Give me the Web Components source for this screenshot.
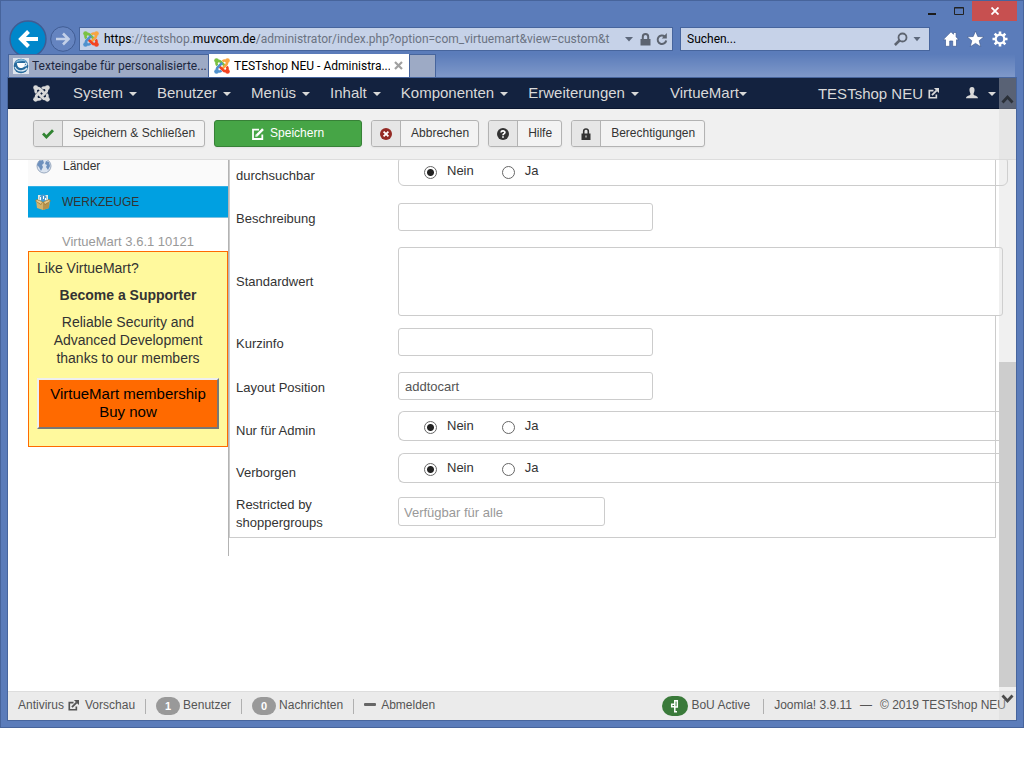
<!DOCTYPE html>
<html lang="de">
<head>
<meta charset="utf-8">
<title>TESTshop NEU - Administration</title>
<style>
html,body{margin:0;background:#fff;font-family:"Liberation Sans",Arial,sans-serif;font-size:13px;color:#333}
</style>
</head>
<body>
<browser-window></browser-window>
<script>
const define = (name, html) => customElements.define(name, class extends HTMLElement {
  constructor() {
    super();
    const t = document.createElement('template');
    t.innerHTML = '<style>*{box-sizing:border-box}button,input,textarea{font:inherit;margin:0}svg{display:block;flex:none}a{color:inherit;text-decoration:none}</style>' + (typeof html === 'function' ? html(this) : html);
    this.attachShadow({mode: 'open'}).append(t.content.cloneNode(true));
  }
});

const ICONS = {
  joomla: (c) => `<svg viewBox="0 0 16 16"><g fill="none" stroke-width="2.5" stroke-linejoin="round">
    <path stroke="${c[0]}" d="M3.2 7.5C2.2 6 2.3 4.6 3.2 3.7 4.4 2.6 6 3 7 4l4.2 4.2"/>
    <path stroke="${c[1]}" d="M8.500 3.200C10 2.200 11.400 2.300 12.300 3.200 13.400 4.400 13 6 12 7L7.800 11.200"/>
    <path stroke="${c[2]}" d="M12.800 8.500C13.800 10 13.700 11.400 12.800 12.300 11.600 13.400 10 13 9 12L4.800 7.800"/>
    <path stroke="${c[3]}" d="M7.500 12.800C6 13.800 4.600 13.700 3.700 12.800 2.600 11.600 3 10 4 9L8.200 4.800"/></g>
    <circle cx="2.500" cy="2.500" r="2.300" fill="${c[0]}"/><circle cx="13.500" cy="2.500" r="2.300" fill="${c[1]}"/>
    <circle cx="13.500" cy="13.500" r="2.300" fill="${c[2]}"/><circle cx="2.500" cy="13.500" r="2.300" fill="${c[3]}"/></svg>`,
  external: '<svg viewBox="0 0 12 12" fill="none" stroke="currentColor"><path stroke-width="1.800" d="M6 2.900H1.400V10.600H9.100V7"/><path stroke-width="2" d="M4.300 7.700 9.500 2.500"/><path fill="currentColor" stroke="none" d="M6.500 0H12V5.500L10.200 3.700 8.300 1.800z"/></svg>',
  check: '<svg viewBox="0 0 12 12"><path fill="none" stroke="#318432" stroke-width="2.800" d="M1 5.600 4.400 9 11 2.300"/></svg>',
  edit: '<svg viewBox="0 0 12 12" fill="none" stroke="#fff"><path stroke-width="1.800" d="M7 1.700H1V11H10.300V6.500"/><path stroke-width="2.400" d="M4.800 7.300 11 1.100"/><path fill="#fff" stroke="none" d="M3.300 8.800 3.700 6.300 5.800 8.400z"/></svg>',
  cancel: '<svg viewBox="0 0 12 12"><circle cx="6" cy="6" r="6" fill="#942a25"/><path stroke="#fff" stroke-width="1.800" d="M3.600 3.600 8.400 8.400M8.400 3.600 3.600 8.400"/></svg>',
  help: '<svg viewBox="0 0 12 12"><circle cx="6" cy="6" r="6" fill="#333"/><path fill="none" stroke="#fff" stroke-width="1.700" d="M4 4.500C4.200 2.300 8 2.400 7.900 4.500 7.800 5.800 6 5.600 6 7.300M6 8.200V9.700"/></svg>',
  lock: '<svg viewBox="0 0 12 12"><path fill="none" stroke="#333" stroke-width="1.600" d="M3.700 6V3.200C3.700.2 8.300.2 8.300 3.200V6"/><path fill="#333" d="M1.500 5.500H10.500V12H1.500z"/><path fill="#eee" d="M5.500 7.500h1v2h-1z"/></svg>',
  user: '<svg viewBox="0 0 12 12"><path fill="currentColor" d="M6 0C8 0 8.700 1.300 8.500 3.500 8.300 5.500 7.500 6 7.500 7.200 7.700 8.800 12 8.300 12 11.300H0C0 8.300 4.300 8.800 4.500 7.200 4.500 6 3.700 5.500 3.500 3.500 3.300 1.300 4 0 6 0z"/></svg>'
};
const WHITE = ['#d9d9d9','#d9d9d9','#d9d9d9','#d9d9d9'];
const COLOUR = ['#7ac143','#f9a541','#f44321','#5091cd'];

/* ---------- browser chrome ---------- */
define('title-bar', `<style>
:host{display:flex;justify-content:flex-end;height:20px;padding-right:6px}
button{border:0;background:none;padding:0;display:grid;place-items:center;width:27px;height:20px}
.x{width:45px;background:#c75050}
</style>
<button aria-label="Minimieren"><svg width="10" height="10"><path fill="#1c1c1c" d="M1 7h8v2H1z"/></svg></button>
<button aria-label="Maximieren"><svg width="10" height="10"><path fill="none" stroke="#222" d="M.5 1.500h9v7h-9zM.5 2h9"/></svg></button>
<button class="x" aria-label="Schließen"><svg width="8" height="8"><path stroke="#fff" stroke-width="1.800" d="M.5.5l7 7M7.500.5l-7 7"/></svg></button>`);

define('address-row', `<style>
:host{display:flex;align-items:center;height:33px;padding:3px 15px 0 8px;font-family:Roboto,"Open Sans",sans-serif;font-size:12px;color:#000}
.nav{border:0;background:none;padding:0;flex:none}
.back{width:38px;height:38px;margin-right:3px}.fwd{width:26px;height:26px;margin-right:3px}
.url,.search{display:flex;align-items:center;height:24px;border:1px solid #47659d;background:#c6d2e8;min-width:0;flex:585 1 0}
.search{flex-grow:234;margin-left:7px;padding:0 8px 0 6px}
.url{padding:0 4px 0 3px}
.text{flex:1;min-width:0;white-space:nowrap;overflow:hidden;color:#6b7382;margin:0 7px 0 5px;line-height:20px}
.text b{font-weight:400;color:#000}
input{border:0;background:none;flex:1;min-width:0;padding:0;outline:0}input::placeholder{color:#000;opacity:1}
.g{border:0;background:none;padding:0;margin-left:5px}
.tools{display:flex;gap:8px;margin-left:13px}.tools button{border:0;padding:0;background:none}
</style>
<button class="nav back" aria-label="Zurück"><svg width="38" height="38"><circle cx="19" cy="19" r="18" fill="#0087ca" stroke="#3f5c93" stroke-width="1.400"/><path fill="none" stroke="#fff" stroke-width="4" d="M29 19H12M19.500 11.500 12 19l7.500 7.500"/></svg></button>
<button class="nav fwd" aria-label="Vorwärts"><svg width="26" height="26"><circle cx="13" cy="13" r="12.300" fill="#6584c0" stroke="#415d94"/><path fill="none" stroke="#c3d0e8" stroke-width="2.600" d="M6 13h12M13 7.500 18.500 13 13 18.500"/></svg></button>
<div class="url">${ICONS.joomla(COLOUR).replace('<svg','<svg width="16" height="16"')}
<div class="text"><b>https</b>://testshop.<b>muvcom.de</b>/administrator/index.php?option=com_virtuemart&amp;view=custom&amp;t</div>
<button class="g" aria-label="Verlauf"><svg width="8" height="5"><path fill="#5d687b" d="M0 0h8L4 4.500z"/></svg></button>
<svg style="margin-left:7px" width="11" height="13"><path fill="none" stroke="#5d6470" stroke-width="2" d="M2.800 7V3.700c0-3.600 5.400-3.600 5.400 0V7"/><path fill="#5d6470" d="M.5 6h10v6.500H.5z"/></svg>
<button class="g" aria-label="Aktualisieren"><svg width="12" height="13"><path fill="none" stroke="#5d6470" stroke-width="2" d="M10.200 7.500A4.300 4.300 0 1 1 8.800 3.500"/><path fill="#5d6470" d="M5.800 5.500h5V0z"/></svg></button></div>
<div class="search"><input aria-label="Suchen" placeholder="Suchen...">
<button class="g" aria-label="Suche starten"><svg width="14" height="14"><circle cx="8.500" cy="5.500" r="4" fill="none" stroke="#5d6470" stroke-width="1.800"/><path stroke="#5d6470" stroke-width="2.500" d="M5.500 8.500.9 13"/></svg></button>
<button class="g" aria-label="Suchanbieter"><svg width="8" height="5"><path fill="#5d687b" d="M.5 0h7L4 4.300z"/></svg></button></div>
<div class="tools">
<button aria-label="Startseite"><svg width="16" height="16"><path fill="#fff" stroke="#435f95" stroke-width=".7" d="M8 .8 10.500 3.300V1.500h2.600V6L16 8.800H13.500V15.300H9.700V10H6.700V15.300H2.500V8.800H0z"/></svg></button>
<button aria-label="Favoriten"><svg width="17" height="16"><path fill="#fff" stroke="#435f95" stroke-width=".7" d="M8.500 0 10.800 5.500 17 5.800 12.200 9.700 13.800 15.800 8.500 12.400 3.200 15.800 4.800 9.700 0 5.800 6.200 5.500z"/></svg></button>
<button aria-label="Extras"><svg width="16" height="16"><g stroke="#fff" stroke-width="2.600"><path d="M8 .5v3M8 12.500v3M.5 8h3M12.500 8h3M2.700 2.700 5 5M11 11l2.300 2.300M13.300 2.700 11 5M5 11l-2.300 2.300"/></g><circle cx="8" cy="8" r="4.300" fill="none" stroke="#fff" stroke-width="2.200"/></svg></button></div>`);

define('browser-tabs', `<style>
:host{display:flex;position:relative;height:23px;font-family:Roboto,"Open Sans",sans-serif;font-size:12px;color:#1c2740}
.tab{display:flex;align-items:center;width:201px;border:1px solid #47659d;border-bottom:0;background:#9daac5;padding:0 0 0 4px;gap:3px;white-space:nowrap}
.tab a{flex:1;min-width:0;overflow:hidden;line-height:20px}
.on{background:#fff;border-width:0;color:#000;width:200px;padding:0 5px;gap:4px}
.new{width:27px;border:1px solid #47659d;border-bottom:0;background:#9daac5;padding:0}
.rest{flex:1;margin-right:8px;background:linear-gradient(#ffffff00,#ffffff38)}
.c{border:0;background:none;padding:0}
</style>
<div class="tab"><svg width="16" height="16"><path fill="#dfe6ee" d="M0 0h16v16H0z"/><circle cx="8" cy="8" r="7.300" fill="#276a9c"/><path fill="#7fb7da" d="M2 5C5 0 11 0 14 4 10 2 6 3 2 5z"/><path fill="#fff" d="M4 5h8c0 4-2 5-4 5s-4-1-4-5z"/><path fill="none" stroke="#d7e9f5" stroke-width="1.300" d="M2 9c2 5 9 5 12 1M12 5c3 0 2 3-1 3"/></svg><a href="#">Texteingabe für personalisierte...</a></div>
<div class="tab on">${ICONS.joomla(COLOUR).replace('<svg','<svg width="16" height="16"')}<a href="#">TESTshop NEU - Administra...</a><button class="c" aria-label="Tab schließen"><svg width="10" height="10"><path stroke="#a0a0a0" stroke-width="2.200" d="M1 1l7 7M8 1 1 8"/></svg></button></div>
<button class="new" aria-label="Neuer Tab"></button><div class="rest"></div>`);

/* ---------- Joomla navigation ---------- */
define('nav-item', `<style>
:host{display:block}a{display:flex;align-items:center;gap:var(--caret-gap,6px);line-height:20px}
i{border:4px solid transparent;border-top-color:#d9d9d9;border-bottom:0;margin-top:2px}
</style><a href="#"><slot></slot><i></i></a>`);

define('joomla-navbar', `<style>
:host{display:flex;align-items:center;height:31px;padding:0 20px 0 25px;background:#13223f;border-bottom:1px solid #0b1730;font-size:15px;color:#d9d9d9}
nav{display:flex;gap:20px;margin-left:23px}.vm{margin-left:11px;--caret-gap:0px}
.right{display:flex;align-items:center;margin-left:auto;gap:27px}.site{display:flex;align-items:center;gap:5px}
.right nav-item{--caret-gap:10px}
</style>
<a href="#" aria-label="Joomla">${ICONS.joomla(WHITE).replace('<svg','<svg width="17" height="17"')}</a>
<nav><nav-item>System</nav-item><nav-item>Benutzer</nav-item><nav-item>Menüs</nav-item><nav-item>Inhalt</nav-item><nav-item>Komponenten</nav-item><nav-item>Erweiterungen</nav-item><nav-item class="vm">VirtueMart</nav-item></nav>
<div class="right"><a class="site" href="#">TESTshop NEU ${ICONS.external.replace('<svg','<svg width="11" height="11"')}</a>
<nav-item>${ICONS.user.replace('<svg','<svg width="12" height="12"')}</nav-item></div>`);

define('tool-button', el => `<style>
:host{display:block}
button{display:flex;align-items:stretch;justify-content:center;height:27px;padding:0;border:1px solid #b3b3b3;border-radius:3px;background:#f3f3f3;color:#333;font-size:12px;overflow:hidden;box-shadow:0 1px 2px #0000000d}
.i{display:grid;place-items:center;width:29px;background:#e6e6e6;border-right:1px solid #b3b3b3}
.t{padding:0 9px 0 10px;line-height:25px;white-space:nowrap}
:host([primary]) button{width:148px;background:#46a546;border-color:#378137;color:#fff}
:host([primary]) .i{background:none;border:0;width:auto}:host([primary]) .t{padding:0 0 0 6px}
</style><button><span class="i">${(ICONS[el.getAttribute('icon')] || '').replace('<svg','<svg width="12" height="12"')}</span><span class="t"><slot></slot></span></button>`);

define('action-toolbar', `<style>
:host{display:flex;align-items:center;gap:9px;height:51px;padding:0 25px 1px;background:#f0f0f0;border-bottom:1px solid #ddd}
</style>
<tool-button icon="check">Speichern &amp; Schließen</tool-button><tool-button icon="edit" primary>Speichern</tool-button>
<tool-button icon="cancel">Abbrechen</tool-button><tool-button icon="help">Hilfe</tool-button><tool-button icon="lock">Berechtigungen</tool-button>`);

/* ---------- VirtueMart sidebar ---------- */
define('supporter-box', `<style>
:host{display:block;border:1px solid #ff6a00;background:#fff99d;padding:7px 8px 17px;font-size:14px;line-height:18px;text-align:center}
p{margin:0 0 9px}.l{text-align:left}
button{display:block;width:100%;margin-top:11px;padding:5px 4px 6px;border:2px solid;border-color:#efefef #777 #777 #efefef;background:#ff6a00;color:#000;font-size:15px;line-height:18px}
</style><p class="l">Like VirtueMart?</p><p><b>Become a Supporter</b></p><p>Reliable Security and Advanced Development thanks to our members</p>
<button>VirtueMart membership<br>Buy now</button>`);

define('vm-sidebar', `<style>
:host{display:block;width:201px;border-right:1px solid #b3b3b3;padding-bottom:109px;font-size:12px;flex:none}
a{display:flex;align-items:center;gap:11px;padding-left:8px}
.item{height:26px;background:#fafafa;padding-bottom:15px}
.head{height:32px;background:#00a0e1;padding-left:7px;border-top:1px solid #2fb0e6;border-bottom:1px solid #7cc0e0}
.v{padding:15px 0 0 34px;line-height:18px;font-size:13px;color:#999}
</style>
<a class="item" href="#"><svg width="16" height="16"><circle cx="8" cy="8" r="7" fill="#dbe4f0" stroke="#9aaac0"/><path fill="#6d90bd" d="M3 3l4-1 1 3-2 2 1 2-2 4-2-4-2-2zM10 3l3 1 1 4-2 4-2-3 1-2-2-1z"/></svg>Länder</a>
<a class="head" href="#"><svg width="16" height="16"><path fill="#e4e8df" d="M3 1h10v6H3z"/><circle cx="8" cy="4" r="3.500" fill="#4d9bd0"/><path fill="#fff" d="M5 3h1v3H5zM8 2h1v3H8zM10 4h1v2h-1z"/><path fill="#d2b26c" d="M1 6 8 8l7-2-1 8-6 2-6-2z"/><path fill="#b5934f" d="M8 8v8l6-2V9z"/><path fill="#a37e3d" d="M0 7l2-2 6 3-2 3zM16 7l-2-2-6 3 2 3z"/><path fill="#e6cd91" d="M1 7l1-1 5 2-1 2zM15 7l-1-1-5 2 1 2z"/></svg>WERKZEUGE</a>
<div class="v">VirtueMart 3.6.1 10121</div><supporter-box></supporter-box>`);

/* ---------- form ---------- */
const rowStyle = `<style>
:host{display:flex;align-items:flex-start;min-height:var(--row,44px);padding-left:6px;line-height:18px}
.label{display:flex;align-items:center;width:162px;padding-right:40px;min-height:var(--row,44px);flex:none}
input,textarea{display:block;border:1px solid #ccc;border-radius:3px;background:#fff;color:#555;outline:0}
input[type=text]{width:255px;height:28px;margin-top:6px;padding:0 6px}
textarea{flex:1;height:69px;margin:6px -8px 0 0;resize:none}
input[type=text].multi{width:207px;height:29px;margin-top:3px;padding:2px 5px 0}
input::placeholder{color:#999;opacity:1}
</style>`;
define('text-row', el => {
  const v = el.getAttribute('value') || '', p = el.getAttribute('placeholder') || '';
  const field = el.hasAttribute('area') ? '<textarea id="f"></textarea>'
    : p ? `<input type="text" id="f" class="multi" placeholder="${p}">`
    : `<input type="text" id="f" value="${v}">`;
  return rowStyle + `<label class="label" for="f"><slot></slot></label>` + field;
});
define('radio-row', rowStyle + `<style>
:host{--row:42px}
.group{display:flex;align-items:center;flex:1;height:30px;margin:1px -5px 0 0;padding:0 0 0 25px;border:1px solid #ccc;border-right:0;border-radius:6px 0 0 6px;gap:28px}
:host([closed]) .group{margin-right:-13px;border-right:1px solid #ccc;border-radius:6px}
.group label{display:flex;align-items:center;gap:10px}
input{appearance:none;width:13px;height:13px;border:1px solid #666;border-radius:50%;margin:2px 0 0}
input:checked{background:radial-gradient(circle,#222 3px,#fff 4px)}
</style><span class="label" id="l"><slot></slot></span>
<div class="group" role="radiogroup" aria-labelledby="l"><label><input type="radio" name="r" checked>Nein</label><label><input type="radio" name="r">Ja</label></div>`);

define('custom-field-form', `<style>
:host{display:block;flex:1;min-width:0}
form{border:solid #ccc;border-width:0 1px 1px;margin:-5px 20px 0 0;padding-bottom:4px}
</style><form>
<radio-row closed>durchsuchbar</radio-row>
<text-row>Beschreibung</text-row>
<text-row area style="--row:81px">Standardwert</text-row>
<text-row>Kurzinfo</text-row>
<text-row value="addtocart">Layout Position</text-row>
<radio-row>Nur für Admin</radio-row>
<radio-row>Verborgen</radio-row>
<text-row placeholder="Verfügbar für alle" style="--row:39px">Restricted by shoppergroups</text-row>
</form>`);

/* ---------- status bar ---------- */
define('status-bar', `<style>
:host{display:flex;align-items:center;height:29px;padding:0 10px 2px;background:#ebebeb;border-top:1px solid #ddd;font-size:12px;color:#555;white-space:nowrap}
a,span{display:flex;align-items:center}
.sep{width:1px;height:15px;background:#b0b0b0;margin:2px 10px 0}
.n{justify-content:center;width:24px;height:18px;border-radius:9px;background:#999;color:#fff;font-weight:700;font-size:11px;margin:2px 3px 0 0}
.bou{background:#3a7a3a;width:26px;height:20px;border-radius:10px}
.r{margin-left:auto}
</style>
<a href="#">Antivirus</a><a href="#" style="gap:6px;margin-left:4px">${ICONS.external.replace('<svg','<svg width="11" height="11"')}Vorschau</a><i class="sep"></i>
<a href="#"><span class="n">1</span>Benutzer</a><i class="sep"></i>
<a href="#"><span class="n">0</span>Nachrichten</a><i class="sep"></i>
<a href="#" style="gap:5px"><svg width="12" height="4"><rect width="12" height="3" rx="1" fill="#666"/></svg>Abmelden</a>
<a class="r" href="#"><span class="n bou"><svg width="10" height="14"><path fill="none" stroke="#fff" stroke-width="1.500" d="M4 1.700H7.300V8H4.500M4.800 2v10.500M4.500 5.200H1.700V7.800H4.500M4 12.700h3"/></svg></span>BoU Active</a>
<i class="sep" style="margin-left:13px"></i><span style="gap:8px">Joomla! 3.9.11 <span>—</span> © 2019 TESTshop NEU</span>`);

define('overlay-scrollbar', `<style>
:host{position:absolute;top:0;right:0;bottom:0;width:17px;display:flex;flex-direction:column;align-items:center;background:#d5d5d55c}
.up{flex:268 1 0;padding-top:16px}.thumb{flex:325 1 0;align-self:stretch;background:#cdcdcd}.down{height:33px;padding-top:7px}
</style>
<div class="up"><svg width="13" height="11"><path fill="none" stroke="#2b3038" stroke-width="2.800" d="M1.500 8.500l5-5.500 5 5.500"/></svg></div>
<div class="thumb"></div>
<div class="down"><svg width="13" height="11"><path fill="none" stroke="#4c4c4c" stroke-width="2.800" d="M1.500 1.500l5 5.500 5-5.500"/></svg></div>`);

define('browser-window', `<style>
:host{display:flex;flex-direction:column;box-sizing:border-box;min-height:calc(100vh - 40px);background:#5b7cba;border:1px solid #47649b}
*{box-sizing:border-box}
browser-tabs{margin-left:7px}
.page{position:relative;flex:1;display:flex;flex-direction:column;margin:0 6px 6px;border:1px solid #47659d;background:#fff;overflow:hidden}
main{display:flex;align-items:flex-start;flex:1;padding-left:20px;overflow:hidden}
</style>
<title-bar></title-bar><address-row></address-row><browser-tabs></browser-tabs>
<div class="page"><joomla-navbar></joomla-navbar><action-toolbar></action-toolbar>
<main><vm-sidebar></vm-sidebar><custom-field-form></custom-field-form></main>
<status-bar></status-bar><overlay-scrollbar></overlay-scrollbar></div>`);
</script>
</body>
</html>
